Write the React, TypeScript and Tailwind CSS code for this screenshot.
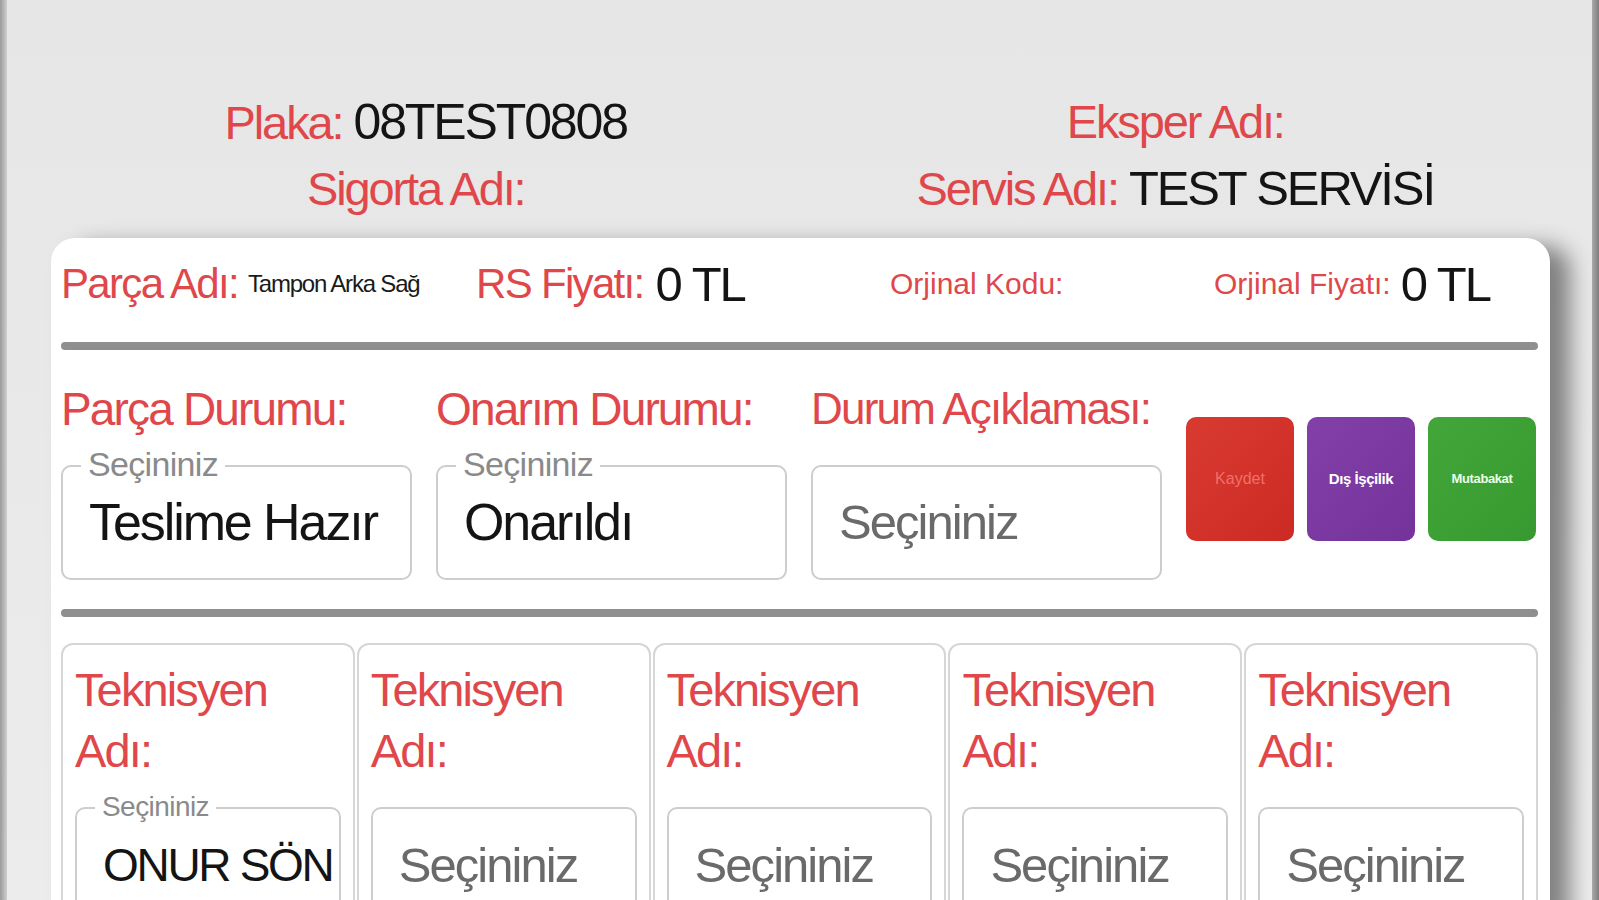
import React from "react";

const RED = "text-[#e0474b]";

function Field({
  label,
  value,
  placeholder,
  labelSize = "text-[34px]",
  valueSize = "text-[52px] tracking-[-0.04em]",
  height = "h-[115px]",
  padding = "px-[26px]",
}: {
  label?: string;
  value?: string;
  placeholder?: string;
  labelSize?: string;
  valueSize?: string;
  height?: string;
  padding?: string;
}) {
  return (
    <div className={`relative ${height} rounded-[10px] border-2 border-[#cdcdcd] bg-white flex items-center ${padding}`}>
      {label && (
        <span
          className={`absolute left-[18px] top-[-2px] -translate-y-1/2 bg-white px-[7px] leading-[1.15] ${labelSize} text-[#8a8a8a] tracking-[-0.02em]`}
        >
          {label}
        </span>
      )}
      <div className="w-full min-w-0 overflow-hidden py-[4px]">
        {value ? (
          <div className={`${valueSize} leading-[1.25] text-[#141414] whitespace-nowrap`}>{value}</div>
        ) : (
          <div className="text-[49px] leading-[1.25] text-[#6a6a6a] tracking-[-0.04em] whitespace-nowrap">
            {placeholder}
          </div>
        )}
      </div>
    </div>
  );
}

function TechCard({ value }: { value?: string }) {
  return (
    <div className="border-2 border-b-0 border-[#d6d6d6] rounded-t-[12px] px-[12px] pt-[14px] h-[300px]">
      <div className={`${RED} text-[47px] leading-[61px] tracking-[-0.04em]`}>
        Teknisyen
        <br />
        Adı:
      </div>
      <div className="mt-[26px]">
        <Field
          label={value ? "Seçininiz" : undefined}
          labelSize="text-[28px]"
          value={value}
          valueSize="text-[46px] tracking-[-0.05em]"
          placeholder="Seçininiz"
          height="h-[118px]"
          padding={value ? "pl-[26px] pr-[2px]" : "px-[26px]"}
        />
      </div>
    </div>
  );
}

export default function App() {
  return (
    <div
      className="w-[1599px] h-[900px] overflow-hidden flex bg-gradient-to-b from-[#e6e6e7] to-[#ececed]"
      style={{ fontFamily: '"Liberation Sans", Arial, sans-serif' }}
    >
      <div className="w-[7px] shrink-0 bg-gradient-to-r from-[#9b9b9b] to-[#cfcfcf]" />
      <div className="flex-1 min-w-0 pl-[44px] pr-[42px] pt-[89px]">
        {/* Header */}
        <div className="grid grid-cols-2 text-[47px] leading-[66px] tracking-[-0.045em]">
          <div className="text-center">
            <div>
              <span className={RED}>Plaka: </span>
              <span className="text-[#141414] text-[50px]">08TEST0808</span>
            </div>
            <div className={`${RED} pr-[20px]`}>Sigorta Adı:</div>
          </div>
          <div className="text-center">
            <div className={RED}>Eksper Adı:</div>
            <div>
              <span className={RED}>Servis Adı: </span>
              <span className="text-[#141414] text-[49px]">TEST SERVİSİ</span>
            </div>
          </div>
        </div>

        {/* Card */}
        <div className="mt-[16px] bg-white rounded-t-[24px] pl-[10px] pr-[12px] pt-[20px] h-[700px] shadow-[20px_8px_22px_rgba(0,0,0,0.45)]">
          {/* Row 1 */}
          <div className="grid grid-cols-[415px_414px_324px_1fr] items-center h-[52px]">
            <div className="flex items-center gap-[10px]">
              <span className={`${RED} text-[42px] tracking-[-0.04em] leading-none`}>Parça Adı:</span>
              <span className="text-[#1a1a1a] text-[24px] tracking-[-0.05em] leading-none">Tampon Arka Sağ</span>
            </div>
            <div className="flex items-center gap-[12px]">
              <span className={`${RED} text-[42px] tracking-[-0.04em] leading-none`}>RS Fiyatı:</span>
              <span className="text-[#141414] text-[49px] tracking-[-0.04em] leading-none">0 TL</span>
            </div>
            <div className="flex items-center">
              <span className={`${RED} text-[30px] leading-none`}>Orjinal Kodu:</span>
            </div>
            <div className="flex items-center gap-[10px]">
              <span className={`${RED} text-[30px] leading-none`}>Orjinal Fiyatı:</span>
              <span className="text-[#141414] text-[49px] tracking-[-0.04em] leading-none">0 TL</span>
            </div>
          </div>

          <div className="mt-[32px] h-[8px] rounded-full bg-[#8f8f8f]" />

          {/* Row 2 */}
          <div className="mt-[34px] grid grid-cols-[351px_351px_351px_1fr] gap-x-[24px]">
            <div>
              <div className={`${RED} text-[46px] leading-[50px] tracking-[-0.04em]`}>Parça Durumu:</div>
              <div className="mt-[31px]">
                <Field label="Seçininiz" value="Teslime Hazır" />
              </div>
            </div>
            <div>
              <div className={`${RED} text-[46px] leading-[50px] tracking-[-0.04em]`}>Onarım Durumu:</div>
              <div className="mt-[31px]">
                <Field label="Seçininiz" value="Onarıldı" />
              </div>
            </div>
            <div>
              <div className={`${RED} text-[44px] leading-[50px] tracking-[-0.04em]`}>Durum Açıklaması:</div>
              <div className="mt-[31px]">
                <Field placeholder="Seçininiz" />
              </div>
            </div>
            <div className="self-start mt-[33px] flex gap-[13px]">
              <button className="w-[108px] h-[124px] rounded-[10px] bg-gradient-to-br from-[#d83a30] to-[#cc2a24] text-[#f07068] text-[16px] flex items-center justify-center">
                Kaydet
              </button>
              <button className="w-[108px] h-[124px] rounded-[10px] bg-gradient-to-br from-[#8240a8] to-[#74339a] text-white text-[15px] font-bold tracking-[-0.03em] flex items-center justify-center">
                Dış İşçilik
              </button>
              <button className="w-[108px] h-[124px] rounded-[10px] bg-gradient-to-br from-[#42a63a] to-[#379a30] text-[#eaffea] text-[13px] font-bold tracking-[-0.03em] flex items-center justify-center">
                Mutabakat
              </button>
            </div>
          </div>

          <div className="mt-[29px] h-[8px] rounded-full bg-[#8f8f8f]" />

          {/* Row 3 */}
          <div className="mt-[26px] grid grid-cols-5 gap-[2px]">
            <TechCard value="ONUR SÖN" />
            <TechCard />
            <TechCard />
            <TechCard />
            <TechCard />
          </div>
        </div>
      </div>
      <div className="w-[7px] shrink-0 bg-gradient-to-l from-[#7e7e7e] to-[#a9a9a9]" />
    </div>
  );
}
